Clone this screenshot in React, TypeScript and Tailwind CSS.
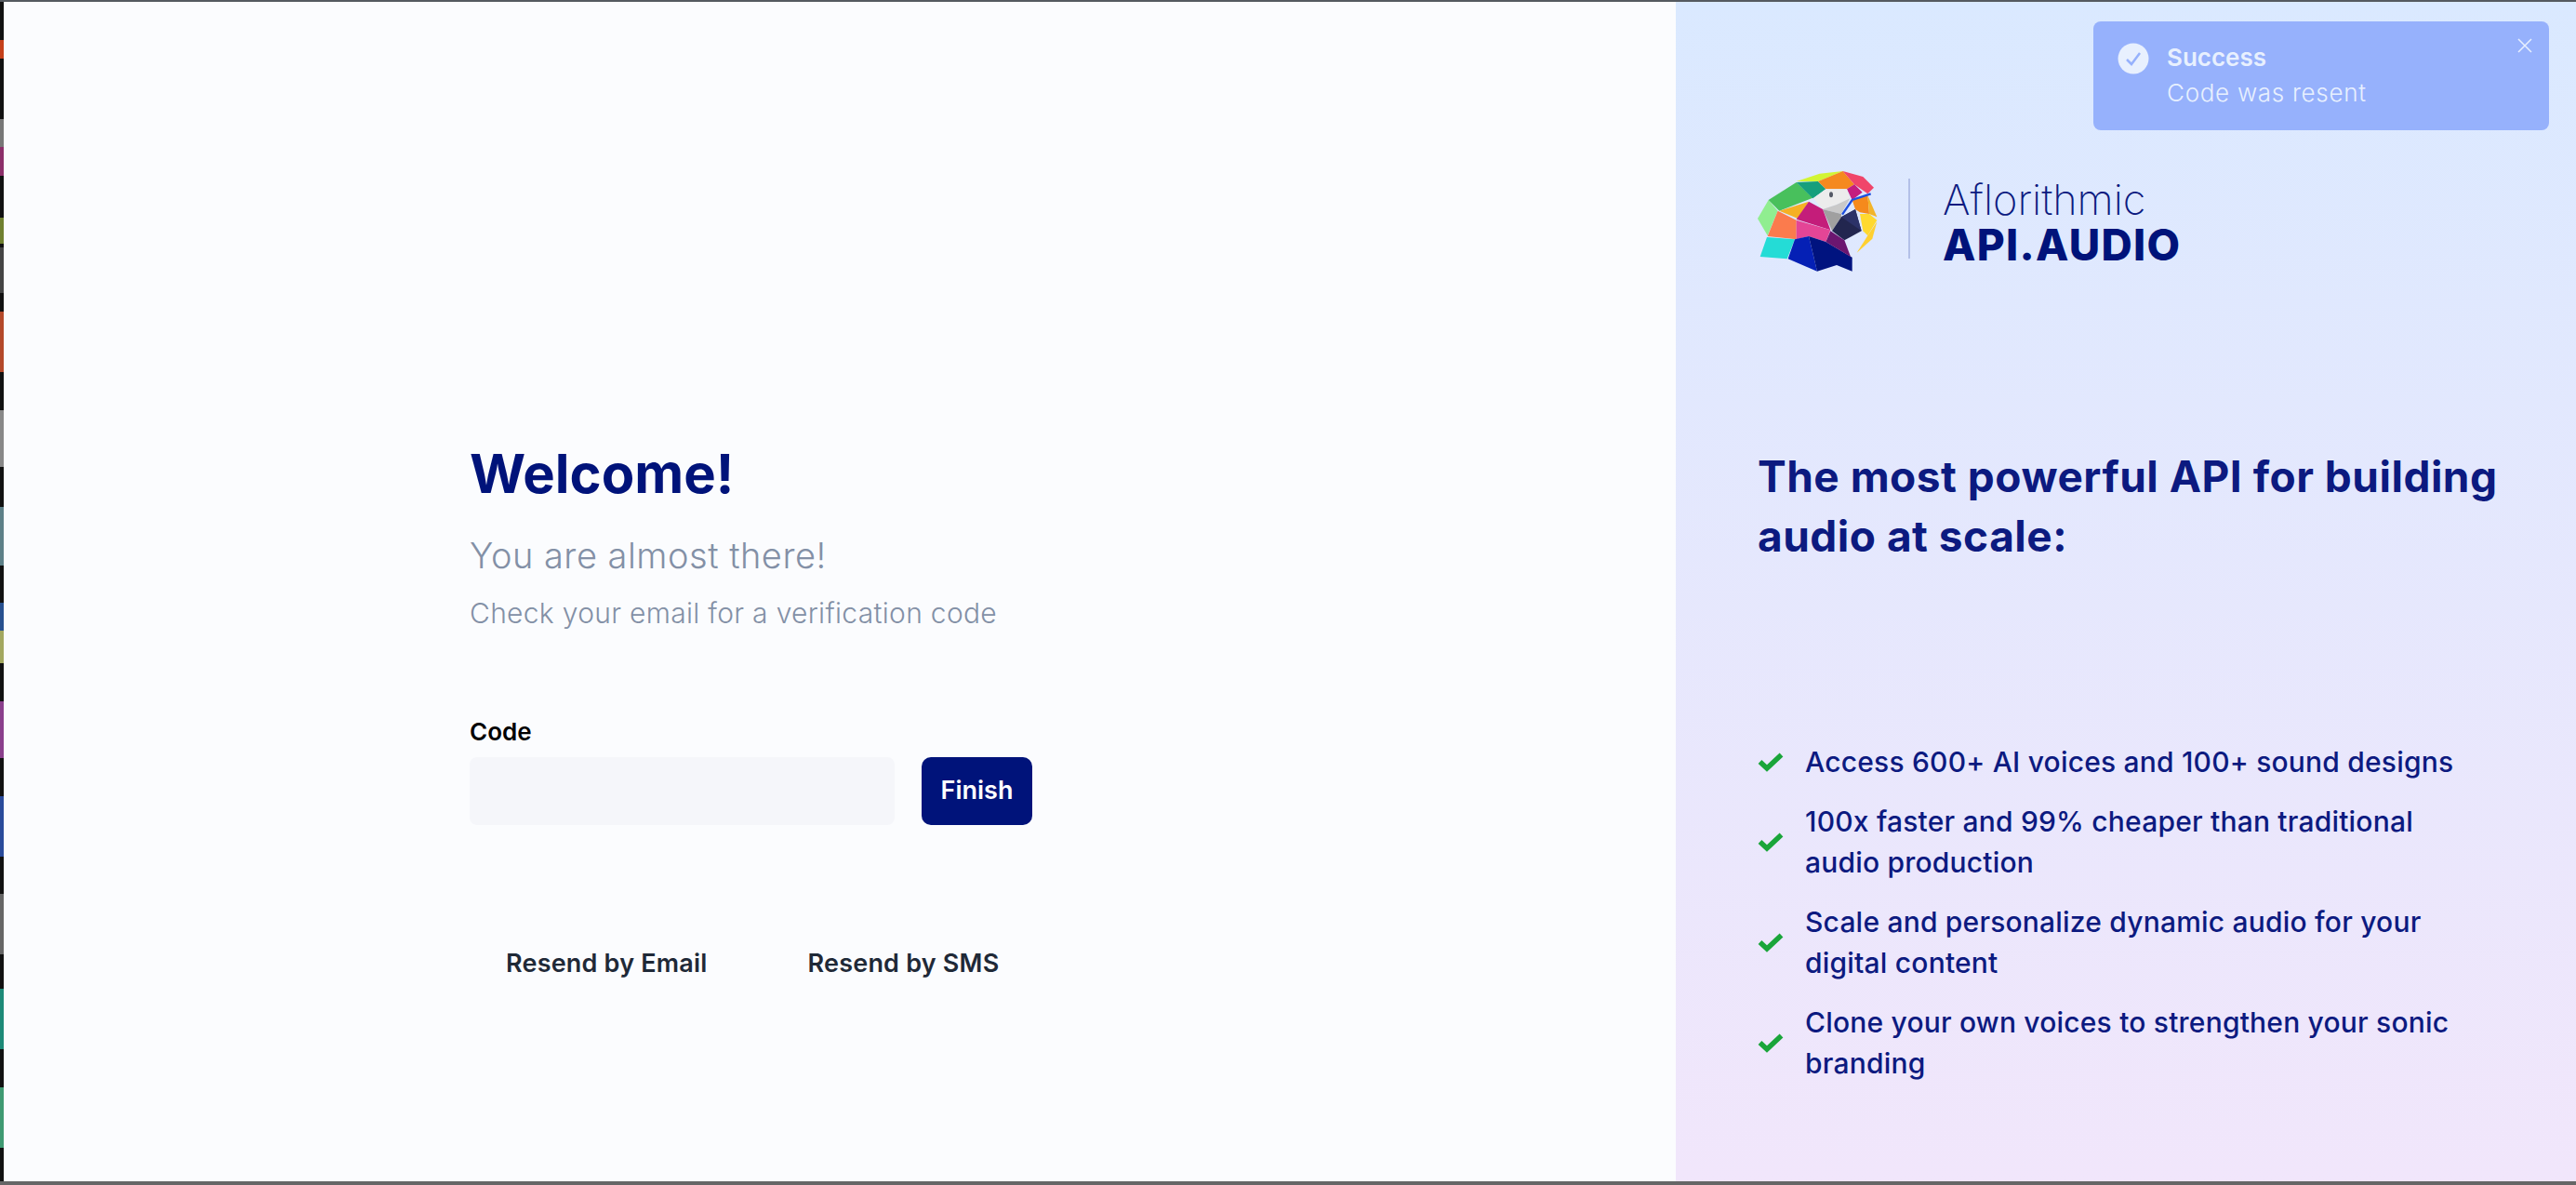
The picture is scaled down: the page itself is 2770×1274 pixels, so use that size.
import React from 'react';

const font = { fontFamily: 'Inter, "Noto Sans", sans-serif' };

// colour patches of the window behind, visible in the thin strip on the left
const stripSegments = [
  { h: 41, c: 'bg-[#111111]' },
  { h: 20, c: 'bg-[#c5401a]' },
  { h: 65, c: 'bg-[#111111]' },
  { h: 30, c: 'bg-[#777777]' },
  { h: 31, c: 'bg-[#8c2f6a]' },
  { h: 45, c: 'bg-[#111111]' },
  { h: 28, c: 'bg-[#6f8030]' },
  { h: 4, c: 'bg-[#111111]' },
  { h: 49, c: 'bg-[#444444]' },
  { h: 20, c: 'bg-[#111111]' },
  { h: 65, c: 'bg-[#b4492a]' },
  { h: 41, c: 'bg-[#111111]' },
  { h: 61, c: 'bg-[#888888]' },
  { h: 43, c: 'bg-[#111111]' },
  { h: 63, c: 'bg-[#5d8088]' },
  { h: 40, c: 'bg-[#111111]' },
  { h: 30, c: 'bg-[#27508f]' },
  { h: 35, c: 'bg-[#a3a860]' },
  { h: 41, c: 'bg-[#111111]' },
  { h: 61, c: 'bg-[#8a3f8c]' },
  { h: 41, c: 'bg-[#111111]' },
  { h: 65, c: 'bg-[#2a4b9b]' },
  { h: 40, c: 'bg-[#111111]' },
  { h: 65, c: 'bg-[#666666]' },
  { h: 37, c: 'bg-[#111111]' },
  { h: 65, c: 'bg-[#1d8a78]' },
  { h: 41, c: 'bg-[#111111]' },
  { h: 65, c: 'bg-[#3f9a72]' },
  { h: 40, c: 'bg-[#111111]' },
];

const parrot: [string, string][] = [
  ['30,195 65,135 95,170 62,250', '#90ee90'],
  ['65,135 155,78 208,128 100,170', '#48c05c'],
  ['155,78 225,75 250,100 208,130', '#169f7c'],
  ['155,75 230,50 305,42 225,75', '#d2f534'],
  ['225,75 305,42 342,85 318,100 250,100', '#f5891f'],
  ['305,42 370,60 405,95 385,115 342,85', '#f0456a'],
  ['342,85 368,110 335,135 318,100', '#c41d7f'],
  ['210,130 250,100 318,100 328,130 285,150 240,165', '#ececec'],
  ['240,165 285,150 328,130 300,180', '#c9c9c9'],
  ['240,165 300,180 300,190 270,235', '#a0a0a0'],
  ['100,170 195,140 160,195', '#f5b025'],
  ['195,140 240,165 265,232 155,197', '#c41d7a'],
  ['95,170 155,200 155,262 62,252', '#fb7b4d'],
  ['155,200 265,232 250,270 195,252 155,262', '#e44596'],
  ['270,235 300,190 345,165 365,235 310,265', '#22264f'],
  ['300,190 345,165 365,235', '#2c3268'],
  ['335,135 385,120 390,180 360,175 345,165', '#f58a1c'],
  ['385,120 415,190 390,180', '#f2b42a'],
  ['360,180 390,180 415,200 385,250 370,235', '#ffd92e'],
  ['350,305 385,250 415,205 400,260', '#ffd030'],
  ['60,255 150,262 125,325 38,318', '#24dcd6'],
  ['150,262 195,252 222,365 128,325', '#0520b5'],
  ['195,252 250,270 335,320 335,365 285,345 222,365', '#00137f'],
  ['265,235 310,265 330,318 250,270', '#6b1670'],
];

const features = [
  ['Access 600+ AI voices and 100+ sound designs'],
  ['100x faster and 99% cheaper than traditional', 'audio production'],
  ['Scale and personalize dynamic audio for your', 'digital content'],
  ['Clone your own voices to strengthen your sonic', 'branding'],
];

const Parrot = () => (
  <svg viewBox="0 0 480 390" className="w-[160px] h-[130px] shrink-0 -ml-[10px]">
    {parrot.map(([points, fill]) => (
      <polygon key={points} points={points} fill={fill} />
    ))}
    <path d="M303 182 L335 135 L395 115" fill="none" stroke="#1c4fe0" strokeWidth="7" />
    <ellipse cx="267" cy="118" rx="6" ry="9" fill="#555a66" />
  </svg>
);

const Check = () => (
  <svg viewBox="0 0 28 22" className="w-[28px] h-[22px] shrink-0">
    <path d="M2.5 11 L10 18 L25.5 3.5" fill="none" stroke="#1aa53a" strokeWidth="5.5" />
  </svg>
);

const Toast = () => (
  <div className="absolute top-[21px] right-[29px] w-[490px] h-[117px] rounded-lg bg-[#96b1fc] flex pl-[26px] pt-[23px] text-[#e8f0fe]">
    <svg viewBox="0 0 34 34" className="w-[34px] h-[34px] shrink-0">
      <circle cx="17" cy="17" r="16.5" fill="#e8f0fe" />
      <path d="M10 18 L15 23 L24 11" fill="none" stroke="#96b1fc" strokeWidth="2.5" />
    </svg>
    <div className="ml-[19px] -mt-[3px]">
      <div className="text-[26px] leading-[38px] font-semibold">Success</div>
      <div className="text-[26px] leading-[37px] font-light tracking-[0.7px]">Code was resent</div>
    </div>
    <svg viewBox="0 0 16 16" className="absolute top-[18px] right-[18px] w-[16px] h-[16px]">
      <path d="M1 1 L15 15 M15 1 L1 15" stroke="#e8f0fe" strokeWidth="1.5" />
    </svg>
  </div>
);

export default function App() {
  return (
    <div className="w-[2770px] h-[1274px] flex flex-col overflow-hidden bg-[#111111]" style={font}>
      <div className="h-[2px] bg-[#555a60] shrink-0" />
      <div className="flex-1 flex min-h-0">
        <div className="w-[4px] shrink-0 flex flex-col overflow-hidden">
          {stripSegments.map((s, i) => (
            <div key={i} className={`w-full shrink-0 ${s.c}`} style={{ height: s.h }} />
          ))}
        </div>

        {/* Form side */}
        <div className="w-[1798px] bg-[#fbfcfe] pl-[501px] pt-[472px]">
          <h1 className="text-[58px] leading-[70px] font-bold text-[#00137a]">Welcome!</h1>
          <p className="mt-[31px] text-[38px] leading-[44px] font-light tracking-[0.5px] text-[#8390a6]">You are almost there!</p>
          <p className="mt-[20px] text-[30px] leading-[40px] font-light tracking-[0.3px] text-[#8390a6]">Check your email for a verification code</p>
          <label className="block mt-[90px] text-[26px] leading-[36px] font-semibold text-black">Code</label>
          <div className="mt-[9px] flex gap-[29px]">
            <input className="w-[457px] h-[73px] rounded-lg bg-[#f5f6fa] outline-none" />
            <button className="w-[119px] h-[73px] rounded-[10px] bg-[#00137a] text-white text-[27px] font-semibold">Finish</button>
          </div>
          <div className="mt-[131px] flex text-[27px] leading-[36px] font-semibold tracking-[0.2px] text-[#1f2937]">
            <span className="ml-[39px]">Resend by Email</span>
            <span className="ml-[108px]">Resend by SMS</span>
          </div>
        </div>

        {/* Marketing side */}
        <div className="relative flex-1 bg-gradient-to-b from-[#dae9ff] to-[#f1e6fb] pl-[88px] text-[#0c1a80]">
          <Toast />
          <div className="mt-[168px] flex items-center">
            <Parrot />
            <div className="ml-[12px] w-[2px] h-[86px] bg-[#b3c0e8]" />
            <div className="ml-[35px] pt-[6px]">
              <div className="text-[45px] leading-[50px] font-extralight">Aflorithmic</div>
              <div className="text-[46px] leading-[46px] font-extrabold tracking-[1.3px] text-[#00137a]">API.AUDIO</div>
            </div>
          </div>
          <h2 className="mt-[180px] text-[46px] leading-[64px] font-bold tracking-[0.5px]">
            The most powerful API for building
            <br />
            audio at scale:
          </h2>
          <ul className="mt-[189px] flex flex-col gap-[20px]">
            {features.map((lines) => (
              <li key={lines[0]} className="flex items-center gap-[23px] text-[30px] leading-[44px] font-medium tracking-[0.2px]">
                <Check />
                <div>
                  {lines.map((l) => (
                    <div key={l}>{l}</div>
                  ))}
                </div>
              </li>
            ))}
          </ul>
        </div>
      </div>
      <div className="h-[4px] bg-[#666666] shrink-0" />
    </div>
  );
}
